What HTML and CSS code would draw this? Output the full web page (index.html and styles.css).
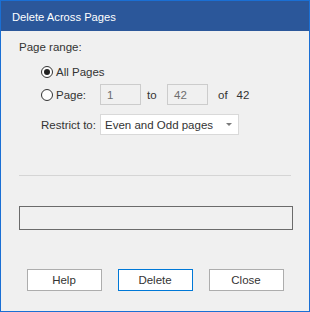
FILE: index.html
```html
<!DOCTYPE html>
<html lang="en">
<head>
  <meta charset="UTF-8" />
  <title>Delete Across Pages</title>
  <link rel="stylesheet" href="styles.css">
</head>
<body>
  <div class="dialog">
    <div class="titulo">Delete Across Pages</div>

    <div class="conteudo">
      <div class="grupo-label">Page range:</div>

      <div class="opcoes">
        <div class="linha">
          <span class="radio marcado"></span>
          <span class="texto-radio">All Pages</span>
        </div>
        <div class="linha">
          <span class="radio"></span>
          <span class="texto-radio largura-fixa">Page:</span>
          <span class="campo">1</span>
          <span class="texto-meio">to</span>
          <span class="campo">42</span>
          <span class="texto-of">of</span>
          <span class="texto-total">42</span>
        </div>
        <div class="linha restrito">
          <span class="texto-restrito">Restrict to:</span>
          <div class="select">
            <span>Even and Odd pages</span>
            <span class="seta"></span>
          </div>
        </div>
      </div>

      <div class="separador"></div>

      <!-- Barra de progresso vazia -->
      <div class="progresso"></div>

      <div class="botoes">
        <button type="button">Help</button>
        <button type="button" class="padrao">Delete</button>
        <button type="button">Close</button>
      </div>
    </div>
  </div>
</body>
</html>
```

FILE: styles.css
```css
:root {
  --cor-borda: #1a6fd4;
  --cor-titulo: #2b579a;
  --cor-fundo: #f0f0f0;
  --cor-texto: #333333;
}

* {
  box-sizing: border-box;
  margin: 0;
  padding: 0;
}

body {
  font-family: 'Liberation Sans', Arial, sans-serif;
  font-size: 11.5px;
  color: var(--cor-texto);
  background: var(--cor-fundo);
}

.dialog {
  width: 310px;
  height: 312px;
  border: 1px solid var(--cor-borda);
  background: var(--cor-fundo);
}

.titulo {
  height: 30px;
  background: var(--cor-titulo);
  color: #fff;
  font-size: 11.2px;
  padding: 9px 0 0 11px;
  line-height: 14px;
}

.conteudo {
  padding: 8px 16px 0 18px;
}

.grupo-label {
  line-height: 16px;
}

.opcoes {
  margin: 6px 0 0 22px;
}

.linha {
  display: flex;
  align-items: center;
  height: 21px;
  margin-bottom: 2px;
}

.radio {
  width: 12px;
  height: 12px;
  border: 1px solid #333;
  border-radius: 50%;
  background: #fff;
  display: flex;
  align-items: center;
  justify-content: center;
}

.marcado::after {
  content: '';
  width: 6px;
  height: 6px;
  border-radius: 50%;
  background: #222;
}

.texto-radio {
  margin-left: 3px;
}

.largura-fixa {
  width: 44px;
}

.campo {
  width: 41px;
  height: 21px;
  border: 1px solid #cccccc;
  background: var(--cor-fundo);
  color: #6d6d6d;
  padding: 3px 0 0 6px;
  line-height: 14px;
}

.texto-meio {
  width: 26px;
  padding-left: 6px;
}

.texto-of {
  margin-left: 10px;
}

.texto-total {
  margin-left: 9px;
}

.restrito {
  margin-top: 9px;
}

.texto-restrito {
  width: 59px;
  white-space: nowrap;
}

.select {
  width: 139px;
  height: 21px;
  border: 1px solid #d9d9d9;
  background: #fff;
  display: flex;
  align-items: center;
  justify-content: space-between;
  padding: 0 6px 0 4px;
}

.seta {
  width: 0;
  height: 0;
  border-left: 3px solid transparent;
  border-right: 3px solid transparent;
  border-top: 3px solid #7a7a7a;
}

.separador {
  height: 1px;
  background: #d5d5d5;
  margin: 40px 2px 0 0;
}

.progresso {
  height: 24px;
  border: 1px solid #6b6b6b;
  margin-top: 30px;
}

.botoes {
  display: flex;
  justify-content: center;
  gap: 16px;
  margin: 39px -16px 0 -18px;
}

button {
  width: 75px;
  height: 22px;
  background: #fff;
  border: 1px solid #adadad;
  font-family: 'Liberation Sans', Arial, sans-serif;
  font-size: 11.5px;
  color: var(--cor-texto);
}

.padrao {
  border-color: #0078d7;
}
```
